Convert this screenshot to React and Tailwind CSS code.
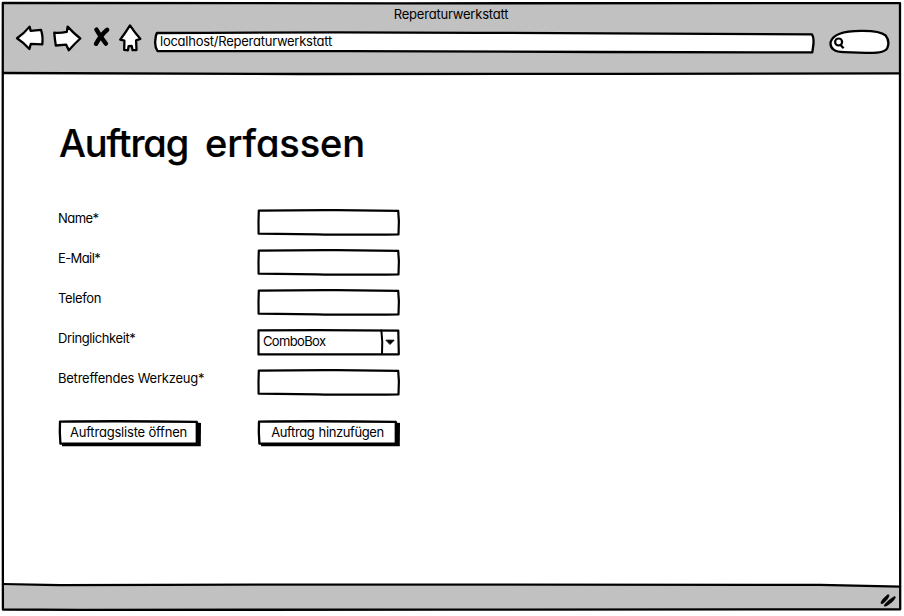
const INK = "#000";

function Outline({ viewBox, children, className = "" }) {
  return (
    <svg
      viewBox={viewBox}
      className={`pointer-events-none absolute inset-0 h-full w-full overflow-visible ${className}`}
      fill="none"
      stroke={INK}
      strokeWidth="2.3"
      strokeLinejoin="round"
      strokeLinecap="round"
      aria-hidden="true"
    >
      {children}
    </svg>
  );
}

function Toolbar() {
  return (
    <nav className="flex items-start">
      <svg
        width="128"
        height="28"
        viewBox="15 24 128 28"
        className="ml-[13px] shrink-0"
        fill="#fff"
        stroke={INK}
        strokeWidth="2.3"
        strokeLinejoin="round"
      >
        <path d="M17 38.3 Q24 33.5 29.6 26.6 L30.6 30.8 L41 29.8 Q43.2 36 42.3 44.4 L30.8 43.9 L29.4 49 Q23.5 42.5 17 38.3Z" />
        <path d="M54.3 32.6 Q60 33.2 66.8 31.8 L67.6 26.6 Q74 33.5 80.3 38.5 Q75 43.2 68.8 50.3 L66.2 44.7 L55.8 45.5 Q54.7 39 54.3 32.6Z" />
        <g fill="none" strokeWidth="4.4" strokeLinecap="round">
          <path d="M96.4 29.6 Q100 36.5 105.9 43.6" />
          <path d="M107.2 29.8 Q101 35 96 43.8" />
        </g>
        <path d="M130 25.4 Q135 33 140.3 38.8 L136.1 40.3 L136.5 50 L132.6 50.2 L131.7 46 L128.6 46.2 L127.9 50.4 L124.2 49.9 L124.4 40.7 L120.2 39.6 Q125 33.5 130 25.4Z" />
      </svg>
      <div className="relative ml-[11px] mt-[8px] h-[20px] w-[660px] pl-[6px]">
        <Outline viewBox="154 32 660 20">
          <path
            d="M157 33 Q320 32 480 32.8 L812 34.4 Q814.3 38 813.2 46 L812.3 52.4 L600 52 L350 51.2 L157.5 51 Q154.4 46 155.4 40 Q155.6 35 157 33Z"
            fill="#fff"
          />
        </Outline>
        <span className="relative block text-[13px] leading-[18px] tracking-[-0.25px]">
          localhost/Reperaturwerkstatt
        </span>
      </div>
      <svg
        width="62"
        height="28"
        viewBox="828 28 62 28"
        className="ml-[14px] mt-[4px] shrink-0"
        fill="#fff"
        stroke={INK}
        strokeWidth="2.3"
      >
        <path d="M861 30.8 Q880 30.5 885.5 35.3 Q890 41 887.5 47.5 Q886 53.5 866 52.9 L844 52.1 Q830 52 830.5 42.5 Q833 31 861 30.8Z" />
        <circle cx="838.6" cy="42" r="3.5" strokeWidth="2.2" />
        <path d="M840.6 45 L843.6 48.3" strokeWidth="2.2" />
      </svg>
    </nav>
  );
}

function FieldBox({ children }) {
  return (
    <div className="relative h-[26px] w-[142px]">
      <Outline viewBox="0 0 142 26">
        <path d="M1.8 1.6 Q40 1 80 1.1 L141.2 1.8 L141.9 12 L141.5 25.4 Q90 26 60 25.4 L1.6 24.7 L1.5 13Z" strokeWidth="2.2" />
      </Outline>
      {children}
    </div>
  );
}

function ComboBox() {
  return (
    <div className="relative flex h-[26px] w-[142px]">
      <Outline viewBox="0 0 142 26">
        <path d="M1.5 1.4 Q70 .8 141.3 1.6 L141.8 25.3 L1.5 25.4Z" strokeWidth="2.2" />
        <path d="M124.4 1.6 Q125.8 12 125 25" strokeWidth="2" />
        <path d="M129.3 11.2 L137.1 11.2 L133.2 15.2Z" fill={INK} strokeWidth="1" />
      </Outline>
      <span className="pl-[6px] text-[13px] leading-[24px] tracking-[-0.65px]">ComboBox</span>
    </div>
  );
}

function Button({ children, textClass }) {
  return (
    <button type="button" className="relative flex h-[26px] w-[143px] justify-center pr-[3px]">
      <Outline viewBox="0 0 143 26">
        <path d="M4 23 L139 2.4 L143 3 L142.8 26.3 L4 26.3Z" fill={INK} stroke="none" />
        <path d="M2 1.7 Q60 .7 138.8 1.9 L138.8 23.4 L2.4 23.6 Q1.4 12 2 1.7Z" fill="#fff" />
      </Outline>
      <span className={`relative text-[13px] leading-[25px] whitespace-nowrap ${textClass}`}>{children}</span>
    </button>
  );
}

function Label({ children, className }) {
  return <label className={`block w-[199px] text-[13px] leading-[18px] whitespace-nowrap ${className}`}>{children}</label>;
}

export default function App() {
  return (
    <div className="h-[616px] w-[904px] overflow-hidden bg-white pl-[2px] pt-[3px] font-[Inter,'Liberation_Sans',sans-serif] text-black [font-feature-settings:'cv11','calt'_0]">
      <div className="relative flex h-[607px] w-[898px] flex-col">
        <header className="h-[71px] bg-[#c1c1c1]">
          <h1 className="h-[21px] text-center text-[13px] leading-[23px] tracking-[-0.2px]">Reperaturwerkstatt</h1>
          <Toolbar />
        </header>

        <main className="grow px-[56px] pt-[40px]">
          <h2 className="pl-[1px] text-[38px] font-medium leading-[58px] tracking-[-0.1px] [-webkit-text-stroke:0.2px_#000]">
            <span className="mr-[7px] tracking-[-1.1px]">Auftrag</span> erfassen
          </h2>
          <form className="mt-[37px] flex flex-col gap-[14px]">
            <div className="flex">
              <Label className="tracking-[-0.55px]">Name*</Label>
              <FieldBox />
            </div>
            <div className="flex">
              <Label className="tracking-[-0.6px]">E-Mail*</Label>
              <FieldBox />
            </div>
            <div className="flex">
              <Label className="tracking-[-0.35px]">Telefon</Label>
              <FieldBox />
            </div>
            <div className="flex">
              <Label className="tracking-[-0.4px]">Dringlichkeit*</Label>
              <ComboBox />
            </div>
            <div className="flex">
              <Label className="tracking-[-0.23px]">Betreffendes Werkzeug*</Label>
              <FieldBox />
            </div>
            <div className="mt-[11px] flex gap-[56px]">
              <Button textClass="left-[0.5px] tracking-[-0.2px]">Auftragsliste öffnen</Button>
              <Button textClass="left-[0.5px] tracking-[-0.4px] [word-spacing:1px]">Auftrag hinzufügen</Button>
            </div>
          </form>
        </main>

        <footer className="flex h-[24px] items-center justify-end bg-[#c1c1c1] pr-[3px]">
          <svg width="18" height="14" viewBox="879 592 18 14" fill={INK} stroke={INK} strokeWidth="0.6" className="mt-[3px]">
            <path d="M881 602.5 Q880 600 888 593.4 Q890.5 594 887 598.5 Q882.5 603.8 881 602.5Z" />
            <path d="M884 604.8 Q886 600.5 894.5 595.4 Q897 595.7 892 601 Q885 606.7 884 604.8Z" />
          </svg>
        </footer>

        <Outline viewBox="2 3 898 607">
          <path
            d="M2.8 3 L400 3.3 L900 3.1 L900 300 L900.2 609.3 L450 609.6 L80 609.9 L2.9 609.5 L2.6 300Z"
            strokeWidth="2.3"
          />
          <path d="M3 73 L300 74 L620 73.8 L900 73.4" />
          <path d="M3 584.2 L60 585.2 L300 584.6 L820 584.8 L900 586.6" />
        </Outline>
      </div>
    </div>
  );
}
